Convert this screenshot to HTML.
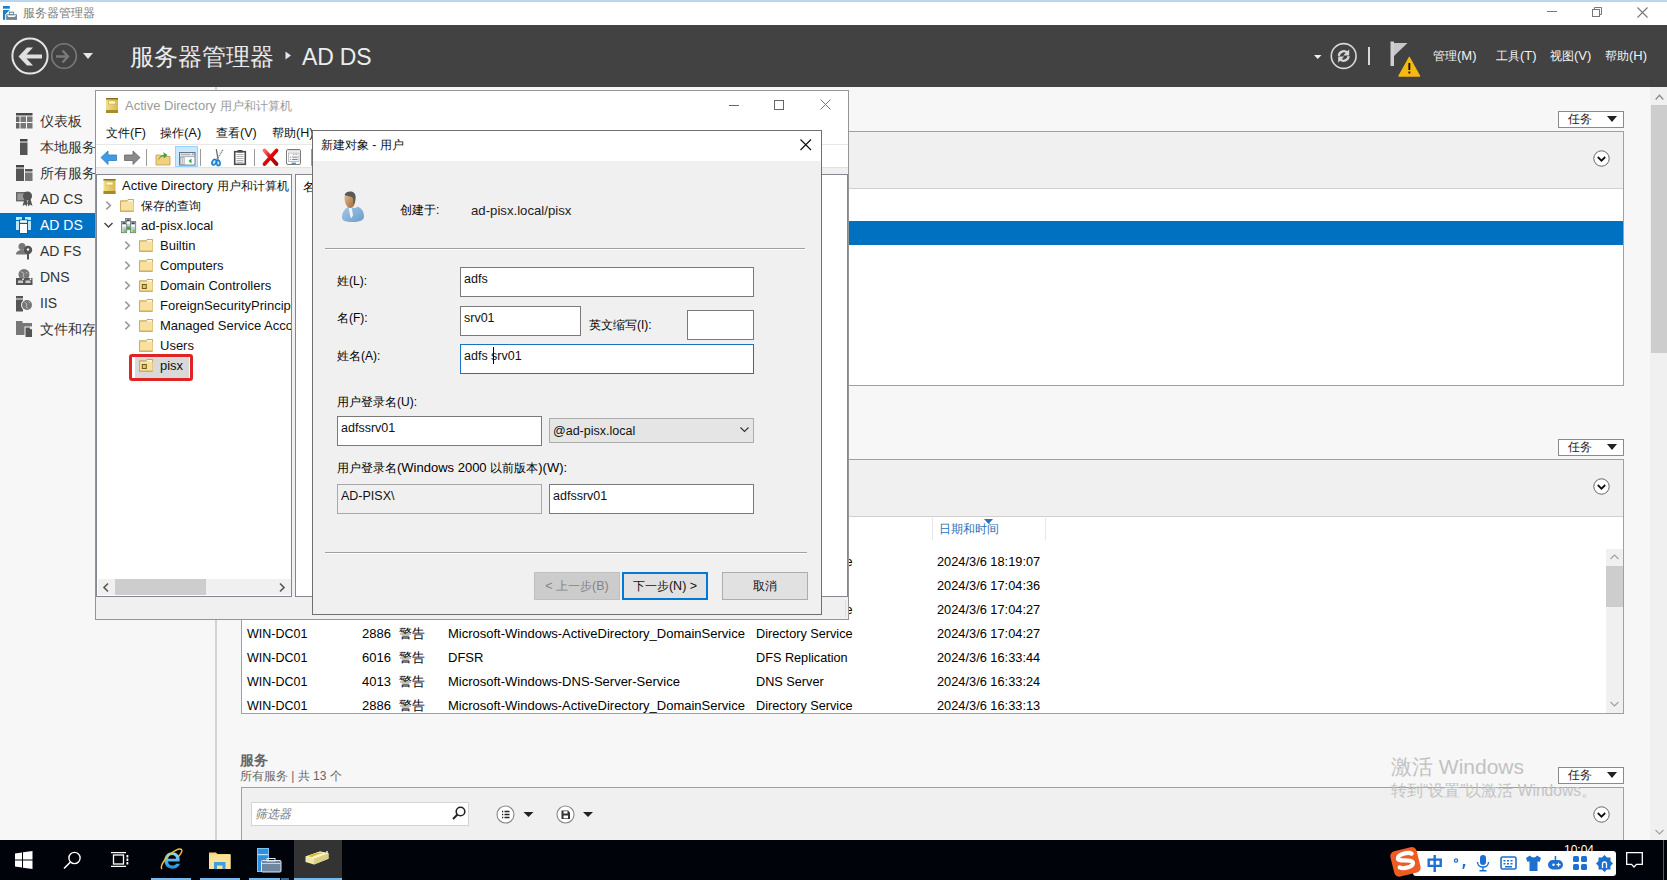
<!DOCTYPE html>
<html><head><meta charset="utf-8">
<style>
*{box-sizing:border-box}
html,body{margin:0;padding:0;width:1667px;height:880px;overflow:hidden;background:#f7f7f7;font-family:"Liberation Sans",sans-serif;color:#000}
.a{position:absolute}
.t{position:absolute;white-space:nowrap;line-height:16px;font-size:13px}
.c{font-size:12px}
svg{position:absolute;overflow:visible}
</style></head><body>
<!-- ===== top title bar ===== -->
<div class="a" style="left:0;top:0;width:1667px;height:2px;background:#bcd5ee"></div>
<div class="a" style="left:0;top:2px;width:1667px;height:23px;background:#fff"></div>
<svg style="left:0;top:2px" width="24" height="22" viewBox="0 0 24 22">
 <rect x="3" y="4" width="6.8" height="2.7" fill="#1f7ccc"/>
 <path d="M3 8h6.8L5.2 12.5V17.8H3z" fill="#1f7ccc"/>
 <rect x="6.2" y="12.3" width="10.8" height="5.6" fill="#6f8797"/>
 <path d="M7 13.2h9.2l-1.5 1.8h-6.2z" fill="#fff"/>
 <rect x="9.5" y="10.2" width="4" height="2.4" fill="none" stroke="#6f8797" stroke-width="1.1"/>
</svg>
<div class="t c" style="left:23px;top:5px;color:#7a7a7a">服务器管理器</div>
<svg style="left:1547px;top:11px" width="11" height="2"><rect width="10" height="1" fill="#777"/></svg>
<svg style="left:1592px;top:7px" width="11" height="11"><rect x="0.5" y="2.5" width="7" height="7" fill="none" stroke="#777"/><path d="M2.5 2.5V0.5h7v7h-2" fill="none" stroke="#777"/></svg>
<svg style="left:1637px;top:7px" width="11" height="11"><path d="M0.5 0.5L10.5 10.5M10.5 0.5L0.5 10.5" stroke="#777" stroke-width="1.1"/></svg>

<!-- ===== dark header ===== -->
<div class="a" style="left:0;top:25px;width:1667px;height:62px;background:#424242"></div>
<svg style="left:0;top:25px" width="100" height="62">
 <circle cx="30" cy="31" r="17.6" fill="none" stroke="#e3e3e3" stroke-width="2"/>
 <path d="M18.5 31.5L27 22.5h6l-6.5 7H42v4H26.5l6.5 7h-6z" fill="#e0e0e0"/>
 <circle cx="64" cy="31" r="12.3" fill="none" stroke="#7a7a7a" stroke-width="1.6"/>
 <path d="M56 31.5h11.5M62.5 25.5l5.5 6-5.5 6" fill="none" stroke="#7a7a7a" stroke-width="2.4"/>
 <path d="M83 28h10l-5 6z" fill="#e6e6e6"/>
</svg>
<div class="t" style="left:130px;top:43px;font-size:24px;line-height:28px;color:#ececec">服务器管理器</div>
<svg style="left:285px;top:51px" width="8" height="10"><path d="M0.5 0.5L6 4.5 0.5 8.5z" fill="#e6e6e6"/></svg>
<div class="t" style="left:302px;top:43px;font-size:23px;line-height:28px;color:#ececec;letter-spacing:-0.2px">AD DS</div>

<svg style="left:1300px;top:25px" width="130" height="62">
 <path d="M14 30h7.5l-3.75 4z" fill="#f0f0f0"/>
 <circle cx="43.7" cy="31" r="12.4" fill="none" stroke="#d8d8d8" stroke-width="1.6"/>
 <path d="M38.8 30.8A5 5 0 0 1 47.2 27.6" fill="none" stroke="#d8d8d8" stroke-width="2.3"/>
 <path d="M49.2 24.3v6.2h-6z" fill="#d8d8d8"/>
 <path d="M48.6 31.2A5 5 0 0 1 40.2 34.4" fill="none" stroke="#d8d8d8" stroke-width="2.3"/>
 <path d="M38.2 37.7v-6.2h6z" fill="#d8d8d8"/>
 <rect x="68" y="22" width="2" height="18" fill="#d8d8d8"/>
 <rect x="90.5" y="16.5" width="3.5" height="24.5" fill="#d0d0d0"/>
 <path d="M94 18h13.5L94 31z" fill="#c8c8c8"/>
 <path d="M109.3 32.5L119.5 51H99z" fill="#f6b811" stroke="#f6b811" stroke-width="1.5" stroke-linejoin="round"/>
 <rect x="108.4" y="38" width="1.9" height="7" fill="#111"/><rect x="108.4" y="46.5" width="1.9" height="2" fill="#111"/>
</svg>
<div class="t" style="left:1433px;top:48px;color:#f2f2f2"><span class="c">管理</span>(M)</div>
<div class="t" style="left:1496px;top:48px;color:#f2f2f2"><span class="c">工具</span>(T)</div>
<div class="t" style="left:1550px;top:48px;color:#f2f2f2"><span class="c">视图</span>(V)</div>
<div class="t" style="left:1605px;top:48px;color:#f2f2f2"><span class="c">帮助</span>(H)</div>

<!-- ===== nav ===== -->
<div class="a" style="left:0;top:87px;width:216px;height:753px;background:#f7f7f7"></div>
<div class="a" style="left:215px;top:87px;width:2px;height:753px;background:#d2d2d2"></div>
<div class="a" style="left:0;top:213px;width:216px;height:25px;background:#0072c6"></div>
<!-- nav placeholder -->
<svg style="left:16px;top:113px" width="17" height="16" viewBox="0 0 17 16">
 <rect x="0" y="0" width="16.5" height="2.5" fill="#4a4a4a"/>
 <rect x="0" y="3.5" width="3.5" height="5.5" fill="#666"/><rect x="4.5" y="3.5" width="5.5" height="5.5" fill="#777"/><rect x="11" y="3.5" width="5.5" height="5.5" fill="#777"/>
 <rect x="0" y="10" width="3.5" height="5.5" fill="#666"/><rect x="4.5" y="10" width="5.5" height="5.5" fill="#777"/><rect x="11" y="10" width="5.5" height="5.5" fill="#777"/>
</svg>
<svg style="left:19.5px;top:139px" width="8" height="16"><rect x="0" y="0" width="7.5" height="2.5" fill="#444"/><rect x="0" y="3.5" width="7.5" height="12.5" fill="#555"/></svg>
<svg style="left:16px;top:165px" width="17" height="17"><rect x="0" y="0" width="8" height="2.5" fill="#444"/><rect x="0" y="3.5" width="8" height="12.5" fill="#555"/><rect x="9" y="4" width="7.5" height="2.5" fill="#555"/><rect x="9" y="7.5" width="7.5" height="8.5" fill="#777"/></svg>
<svg style="left:16px;top:190px" width="17" height="17"><rect x="0.7" y="2.7" width="9" height="8" fill="#999" stroke="#666" stroke-width="1.4"/><circle cx="11.5" cy="6" r="4.6" fill="#555"/><path d="M8.5 9l-2 7 2.5-1.5 1.5 2 1.5-5zM14.5 9l2 7-2.5-1.5-1.5 2-1.5-5z" fill="#555"/></svg>
<svg style="left:15px;top:216px" width="18" height="19" viewBox="0 0 18 19">
 <rect x="1" y="1" width="6" height="3" fill="#b4ecfd"/><rect x="1" y="5" width="6" height="9" fill="#bde6fb"/>
 <rect x="10" y="1" width="6" height="3" fill="#b4ecfd"/><rect x="10" y="5" width="6" height="9" fill="#bde6fb"/>
 <rect x="4" y="3.5" width="9" height="14.5" fill="#0b5d9c"/>
 <rect x="5" y="4.3" width="7" height="2.5" fill="#f4fdff"/><rect x="5" y="8" width="7" height="9" fill="#fff"/>
</svg>
<svg style="left:16px;top:243px" width="17" height="17"><circle cx="6" cy="3.5" r="3.5" fill="#777"/><path d="M0 11.5c0-3 2.5-4.5 6-4.5s5 1 5.5 2v2.5H0z" fill="#777"/><circle cx="12" cy="7" r="4.2" fill="#555"/><circle cx="12" cy="6.5" r="1.2" fill="#f3f3f3"/><rect x="11" y="10" width="2" height="6.5" fill="#555"/></svg>
<svg style="left:16px;top:269px" width="17" height="17"><circle cx="8" cy="5.5" r="5.5" fill="#777"/><path d="M5 2.5l3 2-1 3 2 1.5M10 3l1.5 1.5" stroke="#bbb" stroke-width="1" fill="none"/><rect x="0" y="9" width="16.5" height="7" fill="#555"/><rect x="2" y="11.5" width="5" height="2.5" fill="#ccc"/><rect x="9.5" y="11.5" width="5" height="2.5" fill="#ccc"/><circle cx="7" cy="10.2" r="0.9" fill="#eee"/><circle cx="14.5" cy="10.2" r="0.9" fill="#eee"/></svg>
<svg style="left:16px;top:296px" width="17" height="16"><rect x="0" y="0" width="7" height="2.5" fill="#555"/><rect x="0" y="3.5" width="7" height="12" fill="#555"/><circle cx="11" cy="9" r="6" fill="#f3f3f3"/><circle cx="11" cy="9" r="5" fill="#777"/><path d="M8.5 6l2.5 2-1 3 2 1.5M12.5 5.5l1.5 1.5" stroke="#bbb" stroke-width="1" fill="none"/></svg>
<svg style="left:16px;top:321px" width="17" height="17"><rect x="0" y="0" width="6.5" height="3" fill="#777"/><rect x="0" y="2" width="16" height="12" fill="#777"/><rect x="9" y="6" width="7.5" height="10.5" fill="#555" stroke="#f3f3f3" stroke-width="1"/><circle cx="15" cy="7" r="1.3" fill="#eee"/></svg>
<div class="t c" style="left:40px;top:113px;font-size:14px;line-height:16px;color:#333">仪表板</div>
<div class="t c" style="left:40px;top:139px;font-size:14px;line-height:16px;color:#333">本地服务器</div>
<div class="t c" style="left:40px;top:165px;font-size:14px;line-height:16px;color:#333">所有服务器</div>
<div class="t" style="left:40px;top:191px;font-size:14px;line-height:16px;color:#333">AD CS</div>
<div class="t" style="left:40px;top:217px;font-size:14px;line-height:16px;color:#fff">AD DS</div>
<div class="t" style="left:40px;top:243px;font-size:14px;line-height:16px;color:#333">AD FS</div>
<div class="t" style="left:40px;top:269px;font-size:14px;line-height:16px;color:#333">DNS</div>
<div class="t" style="left:40px;top:295px;font-size:14px;line-height:16px;color:#333">IIS</div>
<div class="t c" style="left:40px;top:321px;font-size:14px;line-height:16px;color:#333">文件和存储服务</div>


<!-- ===== main content ===== -->
<!-- panel 1 -->
<div class="a" style="left:1558px;top:111px;width:66px;height:17px;border:1px solid #8a8a8a;background:#fff"></div>
<div class="t c" style="left:1568px;top:111px;color:#222">任务</div>
<svg style="left:1607px;top:116px" width="10" height="6"><path d="M0 0h10L5 6z" fill="#222"/></svg>
<div class="a" style="left:600px;top:131px;width:1024px;height:255px;border:1px solid #a0a0a0;background:#fff"></div>
<div class="a" style="left:601px;top:132px;width:1022px;height:57px;background:#f0f0f0;border-bottom:1px solid #d0d0d0"></div>
<div class="a" style="left:601px;top:221px;width:1022px;height:24px;background:#0070c0"></div>
<svg style="left:1592px;top:149px" width="19" height="19"><circle cx="9.5" cy="9.5" r="7.7" fill="#fff" stroke="#666" stroke-width="1"/><path d="M5.8 8l3.7 3.7L13.2 8" fill="none" stroke="#111" stroke-width="1.8"/></svg>

<!-- panel 2 -->
<div class="a" style="left:1558px;top:439px;width:66px;height:17px;border:1px solid #8a8a8a;background:#fff"></div>
<div class="t c" style="left:1568px;top:439px;color:#222">任务</div>
<svg style="left:1607px;top:444px" width="10" height="6"><path d="M0 0h10L5 6z" fill="#222"/></svg>
<div class="a" style="left:241px;top:459px;width:1383px;height:255px;border:1px solid #a0a0a0;background:#fff"></div>
<div class="a" style="left:242px;top:460px;width:1381px;height:57px;background:#f0f0f0;border-bottom:1px solid #d0d0d0"></div>
<svg style="left:1592px;top:477px" width="19" height="19"><circle cx="9.5" cy="9.5" r="7.7" fill="#fff" stroke="#666" stroke-width="1"/><path d="M5.8 8l3.7 3.7L13.2 8" fill="none" stroke="#111" stroke-width="1.8"/></svg>
<div class="a" style="left:932px;top:518px;width:1px;height:22px;background:#e6e6e6"></div>
<div class="a" style="left:1045px;top:518px;width:1px;height:22px;background:#e6e6e6"></div>
<div class="t c" style="left:939px;top:521px;color:#2a73b8">日期和时间</div>
<svg style="left:984px;top:519px" width="9" height="5"><path d="M0 0h9L4.5 5z" fill="#2a73b8"/></svg>
<!-- scrollbar in table -->
<div class="a" style="left:1606px;top:549px;width:17px;height:164px;background:#f0f0f0"></div>
<div class="a" style="left:1606px;top:566px;width:17px;height:41px;background:#cdcdcd"></div>
<svg style="left:1610px;top:554px" width="9" height="6"><path d="M0.5 5L4.5 1 8.5 5" fill="none" stroke="#a0a0a0" stroke-width="1.1"/></svg>
<svg style="left:1610px;top:701px" width="9" height="6"><path d="M0.5 1L4.5 5 8.5 1" fill="none" stroke="#a0a0a0" stroke-width="1.1"/></svg>
<!-- rows -->
<div class="a" style="left:242px;top:548px;width:1364px;height:165px;overflow:hidden">
 <div style="position:absolute;left:0;top:1px;width:1364px;height:165px">
  <div class="t" style="left:5px;top:5px;font-size:12.5px">WIN-DC01</div><div class="t" style="left:120px;top:5px">2887</div><div class="t" style="left:157px;top:5px"><span style="font-size:13px">警告</span></div><div class="t" style="left:206px;top:5px">Microsoft-Windows-ActiveDirectory_DomainService</div><div class="t" style="left:514px;top:5px;font-size:12.7px">Directory Service</div><div class="t" style="left:695px;top:5px;font-size:12.8px">2024/3/6 18:19:07</div>
  <div class="t" style="left:5px;top:29px;font-size:12.5px">WIN-DC01</div><div class="t" style="left:120px;top:29px">4013</div><div class="t" style="left:157px;top:29px"><span style="font-size:13px">警告</span></div><div class="t" style="left:206px;top:29px">Microsoft-Windows-DNS-Server-Service</div><div class="t" style="left:514px;top:29px;font-size:12.7px">DNS Server</div><div class="t" style="left:695px;top:29px;font-size:12.8px">2024/3/6 17:04:36</div>
  <div class="t" style="left:5px;top:53px;font-size:12.5px">WIN-DC01</div><div class="t" style="left:120px;top:53px">1202</div><div class="t" style="left:157px;top:53px"><span style="font-size:13px">警告</span></div><div class="t" style="left:206px;top:53px">Microsoft-Windows-ActiveDirectory_DomainService</div><div class="t" style="left:514px;top:53px;font-size:12.7px">Directory Service</div><div class="t" style="left:695px;top:53px;font-size:12.8px">2024/3/6 17:04:27</div>
  <div class="t" style="left:5px;top:77px;font-size:12.5px">WIN-DC01</div><div class="t" style="left:120px;top:77px">2886</div><div class="t" style="left:157px;top:77px"><span style="font-size:13px">警告</span></div><div class="t" style="left:206px;top:77px">Microsoft-Windows-ActiveDirectory_DomainService</div><div class="t" style="left:514px;top:77px;font-size:12.7px">Directory Service</div><div class="t" style="left:695px;top:77px;font-size:12.8px">2024/3/6 17:04:27</div>
  <div class="t" style="left:5px;top:101px;font-size:12.5px">WIN-DC01</div><div class="t" style="left:120px;top:101px">6016</div><div class="t" style="left:157px;top:101px"><span style="font-size:13px">警告</span></div><div class="t" style="left:206px;top:101px">DFSR</div><div class="t" style="left:514px;top:101px;font-size:12.7px">DFS Replication</div><div class="t" style="left:695px;top:101px;font-size:12.8px">2024/3/6 16:33:44</div>
  <div class="t" style="left:5px;top:125px;font-size:12.5px">WIN-DC01</div><div class="t" style="left:120px;top:125px">4013</div><div class="t" style="left:157px;top:125px"><span style="font-size:13px">警告</span></div><div class="t" style="left:206px;top:125px">Microsoft-Windows-DNS-Server-Service</div><div class="t" style="left:514px;top:125px;font-size:12.7px">DNS Server</div><div class="t" style="left:695px;top:125px;font-size:12.8px">2024/3/6 16:33:24</div>
  <div class="t" style="left:5px;top:149px;font-size:12.5px">WIN-DC01</div><div class="t" style="left:120px;top:149px">2886</div><div class="t" style="left:157px;top:149px"><span style="font-size:13px">警告</span></div><div class="t" style="left:206px;top:149px">Microsoft-Windows-ActiveDirectory_DomainService</div><div class="t" style="left:514px;top:149px;font-size:12.7px">Directory Service</div><div class="t" style="left:695px;top:149px;font-size:12.8px">2024/3/6 16:33:13</div>
 </div>
</div>

<!-- services -->
<div class="t" style="left:240px;top:752px;font-size:14px;font-weight:bold;color:#666"><span style="font-size:14px">服务</span></div>
<div class="t c" style="left:240px;top:768px;color:#666">所有服务 | 共 13 个</div>
<div class="a" style="left:1558px;top:767px;width:66px;height:17px;border:1px solid #8a8a8a;background:#fff"></div>
<div class="t c" style="left:1568px;top:767px;color:#222">任务</div>
<svg style="left:1607px;top:772px" width="10" height="6"><path d="M0 0h10L5 6z" fill="#222"/></svg>
<div class="a" style="left:241px;top:787px;width:1383px;height:60px;border:1px solid #a0a0a0;background:#f0f0f0"></div>
<div class="a" style="left:251px;top:802px;width:218px;height:24px;border:1px solid #d4d4d4;background:#fff"></div>
<div class="t c" style="left:255px;top:806px;color:#777;font-style:italic">筛选器</div>
<svg style="left:452px;top:806px" width="14" height="15"><circle cx="8.5" cy="5.5" r="4.3" fill="none" stroke="#222" stroke-width="1.6"/><path d="M5.5 8.5L1 13" stroke="#222" stroke-width="2"/></svg>
<svg style="left:496px;top:805px" width="40" height="19"><circle cx="9.5" cy="9.5" r="8.5" fill="#fff" stroke="#888" stroke-width="1.1"/><path d="M6 6.5h1.2M6 9.5h1.2M6 12.5h1.2M8.5 6.5h5M8.5 9.5h5M8.5 12.5h5" stroke="#222" stroke-width="1.3"/><path d="M27.5 7h10l-5 5z" fill="#222"/></svg>
<svg style="left:556px;top:805px" width="40" height="19"><circle cx="9.5" cy="9.5" r="8.5" fill="#fff" stroke="#888" stroke-width="1.1"/><path d="M5.5 5.5h6.5l2 2v6.5h-8.5z" fill="#333"/><rect x="7.5" y="6.2" width="4" height="2.3" fill="#fff"/><rect x="7.5" y="10.5" width="4.5" height="2.8" fill="#fff"/><path d="M27 7h10l-5 5z" fill="#222"/></svg>
<svg style="left:1592px;top:805px" width="19" height="19"><circle cx="9.5" cy="9.5" r="7.7" fill="#fff" stroke="#666" stroke-width="1"/><path d="M5.8 8l3.7 3.7L13.2 8" fill="none" stroke="#111" stroke-width="1.8"/></svg>
<!-- watermark -->
<div class="t" style="left:1391px;top:755px;font-size:21px;line-height:24px;color:#c2c2c2">激活 Windows</div>
<div class="t" style="left:1391px;top:782px;font-size:15.6px;line-height:18px;color:#c4c4c4">转到“设置”以激活 Windows。</div>
<!-- page scrollbar -->
<div class="a" style="left:1650px;top:87px;width:17px;height:753px;background:#f0f0f0"></div>
<div class="a" style="left:1651px;top:105px;width:16px;height:248px;background:#cdcdcd"></div>
<svg style="left:1655px;top:94px" width="9" height="7"><path d="M0.7 5.5L4.5 1.2 8.3 5.5" fill="none" stroke="#8a8a8a" stroke-width="1.3"/></svg>
<svg style="left:1655px;top:829px" width="9" height="6"><path d="M0.5 1L4.5 5 8.5 1" fill="none" stroke="#a0a0a0" stroke-width="1.1"/></svg>


<!-- ===== ADUC window ===== -->
<div class="a" style="left:95px;top:90px;width:754px;height:530px;border:1px solid #959595;background:#f0f0f0"></div>
<div class="a" style="left:96px;top:91px;width:752px;height:76px;background:#fff"></div>
<div class="a" style="left:96px;top:144px;width:752px;height:1px;background:#e8e8e8"></div>
<div class="a" style="left:96px;top:167px;width:752px;height:1px;background:#e2e2e2"></div>
<svg style="left:106px;top:98px" width="12" height="15" viewBox="0 0 12 15"><defs><linearGradient id="bk" x1="0" x2="1"><stop offset="0" stop-color="#f3e08a"/><stop offset="1" stop-color="#d9b94a"/></linearGradient></defs><rect x="0" y="0" width="12" height="15" fill="url(#bk)"/><rect x="0" y="0" width="12" height="1.5" fill="#8a6d1e"/><rect x="0" y="12" width="12" height="3" fill="#a8892c"/><rect x="2.5" y="3" width="7" height="3" fill="#fffbd0" stroke="#c9ab4a" stroke-width="0.6"/></svg>
<div class="t" style="left:125px;top:98px;color:#9a9a9a;font-size:13px">Active Directory <span class="c">用户和计算机</span></div>
<svg style="left:729px;top:105px" width="12" height="2"><rect width="10" height="1" fill="#666"/></svg>
<svg style="left:774px;top:100px" width="11" height="11"><rect x="0.5" y="0.5" width="9" height="9" fill="none" stroke="#666"/></svg>
<svg style="left:820px;top:99px" width="11" height="11"><path d="M0.5 0.5L10.5 10.5M10.5 0.5L0.5 10.5" stroke="#777" stroke-width="1"/></svg>
<div class="t" style="left:106px;top:125px;font-size:12.5px;color:#111"><span class="c">文件</span>(F)</div>
<div class="t" style="left:160px;top:125px;font-size:13px;color:#111"><span class="c">操作</span>(A)</div>
<div class="t" style="left:216px;top:125px;font-size:12.5px;color:#111"><span class="c">查看</span>(V)</div>
<div class="t" style="left:272px;top:125px;font-size:12.5px;color:#111"><span class="c">帮助</span>(H)</div>
<!-- toolbar -->
<svg style="left:100px;top:148px" width="215" height="20">
 <path d="M1 9.5L8 3v4h8.5v5.5H8v4z" fill="#3f9be6" stroke="#2b7bc2" stroke-width="0.8"/>
 <path d="M40 9.5L33 3v4h-8.5v5.5H33v4z" fill="#8a8a8a" stroke="#666" stroke-width="0.8"/>
 <rect x="46" y="1" width="1" height="17" fill="#9a9a9a"/>
 <path d="M56 7h5l1.5 1.5H70V17H56z" fill="#f1d083" stroke="#c9a04a" stroke-width="0.8"/>
 <path d="M58 13c1-4 3-6 6-6.5l-1-2.5 4.5 3-3.5 3.5-0.5-2.5c-2 0.5-4 2-5.5 5z" fill="#3aa63a"/>
 <rect x="75.5" y="-1.5" width="22" height="20" fill="#cce8ff" stroke="#99d1ff"/>
 <rect x="79.5" y="4.5" width="15.5" height="12.5" fill="#e9eef2" stroke="#6a7580" stroke-width="1"/><path d="M80.5 6.3h10M80.5 8.3h14" stroke="#9aa4ad" stroke-width="0.9"/><rect x="92" y="5.6" width="1" height="1" fill="#6a7580"/><rect x="93.5" y="5.6" width="1" height="1" fill="#6a7580"/>
 <rect x="80.5" y="9.5" width="3.6" height="6.8" fill="#fff" stroke="#8a949c" stroke-width="0.6"/><path d="M81.3 11h2M81.3 13h2M81.3 15h2" stroke="#6a7580" stroke-width="0.8"/>
 <rect x="85.2" y="9.5" width="9" height="6.8" fill="#fff"/><path d="M91.5 10.5v5l-3-2.5z" fill="#3aa63a"/>
 <rect x="100" y="1" width="1" height="17" fill="#9a9a9a"/>
 <path d="M116.3 1.2L118.2 12.5" stroke="#6d6d6d" stroke-width="1.3"/><path d="M122.8 2L116.2 12.5" stroke="#7d8a96" stroke-width="1.6" stroke-dasharray="1.2 0.8"/>
 <ellipse cx="114.2" cy="14.2" rx="2" ry="2.9" transform="rotate(30 114.2 14.2)" fill="#bfe3fb" stroke="#1f7fcf" stroke-width="1.6"/>
 <ellipse cx="118.3" cy="15" rx="1.8" ry="2.6" transform="rotate(-10 118.3 15)" fill="#bfe3fb" stroke="#1f7fcf" stroke-width="1.6"/>
 <rect x="134.7" y="3.7" width="10.6" height="12.6" fill="#fff" stroke="#4a4a4a" stroke-width="1.6"/><rect x="137.5" y="2" width="5" height="2.5" fill="#4a4a4a"/><path d="M136.5 6.5h7M136.5 8.5h7M136.5 10.5h7M136.5 12.5h7M136.5 14.3h7" stroke="#9a9a9a" stroke-width="0.8"/>
 <rect x="154" y="1" width="1" height="17" fill="#9a9a9a"/>
 <defs><linearGradient id="rx" x1="0" y1="0" x2="1" y2="1"><stop offset="0" stop-color="#f07070"/><stop offset="0.5" stop-color="#e00000"/><stop offset="1" stop-color="#a00000"/></linearGradient></defs>
 <path d="M164.5 2.5l12 13.5M176.5 2.5l-12 13.5" stroke="url(#rx)" stroke-width="3.8" stroke-linecap="round"/>
 <rect x="186.5" y="1.5" width="14" height="15" rx="1.5" fill="#fff" stroke="#7a7a7a" stroke-width="1"/><rect x="187" y="2" width="13" height="1.5" fill="#ddd"/><rect x="188.5" y="5" width="10.5" height="8.5" fill="#f6f6f6" stroke="#a8a8a8" stroke-width="0.7"/><path d="M193 6.3h1.5M195.5 6.3h1.5" stroke="#8a9aa8" stroke-width="0.9"/><path d="M190.2 9.2h0.8M192.2 9.2h5.5M190.2 11.5h0.8M192.2 11.5h5.5" stroke="#6a7a8a" stroke-width="0.9"/><rect x="191.5" y="14.6" width="4.5" height="1.6" fill="#3fa0e0"/>
 <rect x="211" y="1" width="1" height="17" fill="#9a9a9a"/>
</svg>
<!-- panes -->
<div class="a" style="left:96px;top:174px;width:196px;height:423px;border:1px solid #828790;background:#fff;overflow:hidden">
 <div class="a" style="left:1px;top:404px;width:193px;height:16px;background:#f0f0f0"></div>
 <div class="a" style="left:18px;top:404px;width:91px;height:16px;background:#cdcdcd"></div>
 <svg style="left:6px;top:408px" width="6" height="9"><path d="M5 0.5L1 4.5 5 8.5" fill="none" stroke="#555" stroke-width="1.6"/></svg>
 <svg style="left:182px;top:408px" width="6" height="9"><path d="M1 0.5L5 4.5 1 8.5" fill="none" stroke="#555" stroke-width="1.6"/></svg>
</div>
<div class="a" style="left:295px;top:174px;width:553px;height:423px;border:1px solid #828790;background:#fff"></div>
<div class="t c" style="left:303px;top:179px;color:#000">名</div>
<div class="a" style="left:845px;top:600px;width:1px;height:17px;background:#dadada"></div>
<div class="a" style="left:0;top:0;width:291px;height:579px;overflow:hidden"><svg style="left:103px;top:179px" width="13" height="15" viewBox="0 0 12 15"><rect x="0" y="0" width="12" height="15" fill="url(#bk)"/><rect x="0" y="0" width="12" height="1.5" fill="#8a6d1e"/><rect x="0" y="12" width="12" height="3" fill="#a8892c"/><rect x="2.5" y="3" width="7" height="3" fill="#fffbd0" stroke="#c9ab4a" stroke-width="0.6"/></svg>
<div class="t" style="left:122px;top:178px;font-size:13px;color:#111">Active Directory <span class="c">用户和计算机</span></div>
<svg style="left:105px;top:201px" width="7" height="9"><path d="M1.3 0.7L5.3 4.5 1.3 8.3" fill="none" stroke="#9a9a9a" stroke-width="1.6"/></svg>
<svg style="left:120px;top:199px" width="15" height="13"><path d="M0.5 1.8h6.3l1.3-1.3h5.4v12h-13z" fill="#f3d27e" stroke="#c59d4c" stroke-width="0.9"/><rect x="8.3" y="1.2" width="4.8" height="1.4" fill="#fff"/><rect x="0.9" y="3" width="12.7" height="9.1" fill="#f8e0a0"/><rect x="0.9" y="11" width="12.7" height="1.1" fill="#e8c878"/></svg>
<div class="t c" style="left:141px;top:198px;color:#111">保存的查询</div>
<svg style="left:104px;top:222px" width="10" height="7"><path d="M0.5 1L4.5 5 8.5 1" fill="none" stroke="#444" stroke-width="1.4"/></svg>
<svg style="left:121px;top:218px" width="16" height="16" viewBox="0 0 16 16">
 <g stroke="#6d7378" stroke-width="0.8">
 <rect x="4.4" y="0.4" width="5.3" height="11.3" fill="#c9cfd4"/>
 <rect x="0.4" y="3.4" width="5.3" height="11.3" fill="#c9cfd4"/>
 <rect x="9.4" y="3.4" width="5.3" height="11.3" fill="#c9cfd4"/>
 </g>
 <rect x="1.5" y="4.5" width="3.2" height="1.3" fill="#222"/><rect x="10.5" y="4.5" width="3.2" height="1.3" fill="#222"/><rect x="5.5" y="1.5" width="3.2" height="1.3" fill="#222"/>
 <rect x="1.2" y="7" width="3.8" height="1.8" fill="#f2f8fc"/><rect x="10.2" y="7" width="3.8" height="1.8" fill="#f2f8fc"/><rect x="5.7" y="4" width="3.4" height="1.8" fill="#f2f8fc"/>
 <rect x="2.5" y="11.5" width="2.8" height="2.8" fill="#6fd04a"/><rect x="11.5" y="11.5" width="2.8" height="2.8" fill="#6fd04a"/><rect x="6" y="8.5" width="3.2" height="2.8" fill="#3faa3a"/>
</svg>
<div class="t" style="left:141px;top:218px;font-size:13px;color:#111">ad-pisx.local</div>
<svg style="left:124px;top:241px" width="7" height="9"><path d="M1.3 0.7L5.3 4.5 1.3 8.3" fill="none" stroke="#9a9a9a" stroke-width="1.6"/></svg>
<svg style="left:139px;top:239px" width="15" height="13"><path d="M0.5 1.8h6.3l1.3-1.3h5.4v12h-13z" fill="#f3d27e" stroke="#c59d4c" stroke-width="0.9"/><rect x="8.3" y="1.2" width="4.8" height="1.4" fill="#fff"/><rect x="0.9" y="3" width="12.7" height="9.1" fill="#f8e0a0"/><rect x="0.9" y="11" width="12.7" height="1.1" fill="#e8c878"/></svg>
<div class="t" style="left:160px;top:238px;font-size:13px;color:#111">Builtin</div>
<svg style="left:124px;top:261px" width="7" height="9"><path d="M1.3 0.7L5.3 4.5 1.3 8.3" fill="none" stroke="#9a9a9a" stroke-width="1.6"/></svg>
<svg style="left:139px;top:259px" width="15" height="13"><path d="M0.5 1.8h6.3l1.3-1.3h5.4v12h-13z" fill="#f3d27e" stroke="#c59d4c" stroke-width="0.9"/><rect x="8.3" y="1.2" width="4.8" height="1.4" fill="#fff"/><rect x="0.9" y="3" width="12.7" height="9.1" fill="#f8e0a0"/><rect x="0.9" y="11" width="12.7" height="1.1" fill="#e8c878"/></svg>
<div class="t" style="left:160px;top:258px;font-size:13px;color:#111">Computers</div>
<svg style="left:124px;top:281px" width="7" height="9"><path d="M1.3 0.7L5.3 4.5 1.3 8.3" fill="none" stroke="#9a9a9a" stroke-width="1.6"/></svg>
<svg style="left:139px;top:279px" width="15" height="13"><path d="M0.5 1.8h6.3l1.3-1.3h5.4v12h-13z" fill="#f3d27e" stroke="#c59d4c" stroke-width="0.9"/><rect x="8.3" y="1.2" width="4.8" height="1.4" fill="#fff"/><rect x="0.9" y="3" width="12.7" height="9.1" fill="#f8e0a0"/><rect x="0.9" y="11" width="12.7" height="1.1" fill="#e8c878"/><rect x="2.8" y="5" width="5" height="5" fill="#6e5a16"/><rect x="3.8" y="6" width="3" height="3" fill="#d8c870"/></svg>
<div class="t" style="left:160px;top:278px;font-size:13px;color:#111">Domain Controllers</div>
<svg style="left:124px;top:301px" width="7" height="9"><path d="M1.3 0.7L5.3 4.5 1.3 8.3" fill="none" stroke="#9a9a9a" stroke-width="1.6"/></svg>
<svg style="left:139px;top:299px" width="15" height="13"><path d="M0.5 1.8h6.3l1.3-1.3h5.4v12h-13z" fill="#f3d27e" stroke="#c59d4c" stroke-width="0.9"/><rect x="8.3" y="1.2" width="4.8" height="1.4" fill="#fff"/><rect x="0.9" y="3" width="12.7" height="9.1" fill="#f8e0a0"/><rect x="0.9" y="11" width="12.7" height="1.1" fill="#e8c878"/></svg>
<div class="t" style="left:160px;top:298px;font-size:13px;color:#111">ForeignSecurityPrincipals</div>
<svg style="left:124px;top:321px" width="7" height="9"><path d="M1.3 0.7L5.3 4.5 1.3 8.3" fill="none" stroke="#9a9a9a" stroke-width="1.6"/></svg>
<svg style="left:139px;top:319px" width="15" height="13"><path d="M0.5 1.8h6.3l1.3-1.3h5.4v12h-13z" fill="#f3d27e" stroke="#c59d4c" stroke-width="0.9"/><rect x="8.3" y="1.2" width="4.8" height="1.4" fill="#fff"/><rect x="0.9" y="3" width="12.7" height="9.1" fill="#f8e0a0"/><rect x="0.9" y="11" width="12.7" height="1.1" fill="#e8c878"/></svg>
<div class="t" style="left:160px;top:318px;font-size:13px;color:#111">Managed Service Accounts</div>
<svg style="left:139px;top:339px" width="15" height="13"><path d="M0.5 1.8h6.3l1.3-1.3h5.4v12h-13z" fill="#f3d27e" stroke="#c59d4c" stroke-width="0.9"/><rect x="8.3" y="1.2" width="4.8" height="1.4" fill="#fff"/><rect x="0.9" y="3" width="12.7" height="9.1" fill="#f8e0a0"/><rect x="0.9" y="11" width="12.7" height="1.1" fill="#e8c878"/></svg>
<div class="t" style="left:160px;top:338px;font-size:13px;color:#111">Users</div>
<div class="a" style="left:129px;top:354px;width:64px;height:27px;border:3px solid #e02424;border-radius:3px"></div>
<div class="a" style="left:135px;top:357px;width:54px;height:21px;background:#d9d9d9"></div>
<svg style="left:139px;top:359px" width="15" height="13"><path d="M0.5 1.8h6.3l1.3-1.3h5.4v12h-13z" fill="#f3d27e" stroke="#c59d4c" stroke-width="0.9"/><rect x="8.3" y="1.2" width="4.8" height="1.4" fill="#fff"/><rect x="0.9" y="3" width="12.7" height="9.1" fill="#f8e0a0"/><rect x="0.9" y="11" width="12.7" height="1.1" fill="#e8c878"/><rect x="2.8" y="5" width="5" height="5" fill="#6e5a16"/><rect x="3.8" y="6" width="3" height="3" fill="#d8c870"/></svg>
<div class="t" style="left:160px;top:358px;font-size:13px;color:#111">pisx</div></div>


<!-- ===== dialog ===== -->
<div class="a" style="left:312px;top:130px;width:510px;height:485px;border:1px solid #6f6f6f;background:#f0f0f0"></div>
<div class="a" style="left:313px;top:131px;width:508px;height:30px;background:#fff"></div>
<div class="t c" style="left:321px;top:137px;color:#111">新建对象 - 用户</div>
<svg style="left:800px;top:139px" width="12" height="12"><path d="M0.5 0.5L11 11M11 0.5L0.5 11" stroke="#111" stroke-width="1.2"/></svg>
<!-- user icon -->
<svg style="left:341px;top:191px" width="24" height="33" viewBox="0 0 24 33">
 <defs><linearGradient id="fc" x1="0" y1="0" x2="1" y2="1"><stop offset="0" stop-color="#e8c49a"/><stop offset="1" stop-color="#9a6232"/></linearGradient>
 <linearGradient id="sh" x1="0" y1="0" x2="1" y2="1"><stop offset="0" stop-color="#a5c8e8"/><stop offset="1" stop-color="#6b9bcb"/></linearGradient></defs>
 <path d="M1 26.5c0-5 2.5-9 7.5-11l2 1 4 0.5 2-1.5c4 1.5 6.5 5 6.5 10 0 3-3 5.5-11 5.5S1 29.5 1 26.5z" fill="url(#sh)"/>
 <path d="M7.5 15.5c0.5 4 1.5 9 2.5 12l2-3c-0.5-3-1-6-1.5-9z" fill="#eef4fa"/>
 <path d="M3.5 6.5c0-3.5 2.5-5.5 5.5-5.5s5.5 2 5.5 5.5c0 4.5-1 10-5 10.5s-6-6-6-10.5z" fill="url(#fc)"/>
 <path d="M3.5 4c1-2.5 3-3.5 5.5-3.5 3.5 0 5.5 2 5.5 5 0 2.5-0.5 5-1.5 7.5l-1-1c0.5-2 0.5-4-0.5-5.5-2-1-5-1.5-8-2.5z" fill="#5a5a5a"/>
</svg>
<div class="t c" style="left:400px;top:202px;color:#000">创建于:</div>
<div class="t" style="left:471px;top:203px;font-size:13.2px;color:#222">ad-pisx.local/pisx</div>
<div class="a" style="left:325px;top:248px;width:480px;height:1px;background:#a0a0a0"></div>
<div class="a" style="left:325px;top:249px;width:480px;height:1px;background:#fff"></div>

<div class="t c" style="left:337px;top:273px;color:#000">姓(L):</div>
<div class="a" style="left:460px;top:267px;width:294px;height:30px;border:1px solid #7a7a7a;background:#fff"></div>
<div class="t" style="left:464px;top:271px;font-size:12.5px;color:#111">adfs</div>

<div class="t c" style="left:337px;top:310px;color:#000">名(F):</div>
<div class="a" style="left:460px;top:306px;width:121px;height:30px;border:1px solid #7a7a7a;background:#fff"></div>
<div class="t" style="left:464px;top:310px;font-size:12.5px;color:#111">srv01</div>
<div class="t c" style="left:589px;top:317px;color:#000">英文缩写(I):</div>
<div class="a" style="left:687px;top:310px;width:67px;height:30px;border:1px solid #7a7a7a;background:#fff"></div>

<div class="t c" style="left:337px;top:348px;color:#000">姓名(A):</div>
<div class="a" style="left:460px;top:344px;width:294px;height:30px;border:1px solid #1a72c0;background:#fff"></div>
<div class="t" style="left:464px;top:348px;font-size:12.5px;color:#111">adfs srv01</div>
<div class="a" style="left:493px;top:347px;width:1px;height:17px;background:#000"></div>

<div class="t c" style="left:337px;top:394px;color:#000">用户登录名(U):</div>
<div class="a" style="left:337px;top:416px;width:205px;height:30px;border:1px solid #7a7a7a;background:#fff"></div>
<div class="t" style="left:341px;top:420px;font-size:12.5px;color:#111">adfssrv01</div>
<div class="a" style="left:549px;top:418px;width:205px;height:25px;border:1px solid #adadad;background:#e5e5e5"></div>
<div class="t" style="left:553px;top:423px;font-size:12.5px;color:#111">@ad-pisx.local</div>
<svg style="left:740px;top:427px" width="10" height="6"><path d="M0.5 0.5L4.5 4.5 8.5 0.5" fill="none" stroke="#333" stroke-width="1.1"/></svg>

<div class="t" style="left:337px;top:460px;color:#000;font-size:13px"><span class="c">用户登录名</span>(Windows 2000 <span class="c">以前版本</span>)(W):</div>
<div class="a" style="left:337px;top:484px;width:205px;height:30px;border:1px solid #a8a8a8;background:#f0f0f0"></div>
<div class="t" style="left:341px;top:488px;font-size:12.5px;color:#111">AD-PISX\</div>
<div class="a" style="left:549px;top:484px;width:205px;height:30px;border:1px solid #7a7a7a;background:#fff"></div>
<div class="t" style="left:553px;top:488px;font-size:12.5px;color:#111">adfssrv01</div>

<div class="a" style="left:325px;top:552px;width:482px;height:1px;background:#a0a0a0"></div>
<div class="a" style="left:325px;top:553px;width:482px;height:1px;background:#fff"></div>

<div class="a" style="left:534px;top:572px;width:86px;height:28px;border:1px solid #bfbfbf;background:#cccccc"></div>
<div class="t" style="left:534px;top:578px;width:86px;text-align:center;font-size:12.5px;color:#838383">&lt; <span class="c">上一步</span>(B)</div>
<div class="a" style="left:622px;top:572px;width:86px;height:28px;border:2px solid #0078d7;background:#e1e1e1"></div>
<div class="t" style="left:622px;top:578px;width:86px;text-align:center;font-size:12.5px;color:#111"><span class="c">下一步</span>(N) &gt;</div>
<div class="a" style="left:722px;top:572px;width:86px;height:28px;border:1px solid #adadad;background:#e1e1e1"></div>
<div class="t c" style="left:722px;top:578px;width:86px;text-align:center;color:#111">取消</div>


<!-- ===== taskbar ===== -->
<div class="a" style="left:0;top:840px;width:1667px;height:40px;background:#01030a"></div>
<svg style="left:15px;top:851px" width="18" height="18"><path d="M0 2.4L7 1.4v7.1H0zM8 1.3L17.5 0v8.5H8zM0 9.5h7v7.1L0 15.6zM8 9.5h9.5V18L8 16.7z" fill="#fff"/></svg>
<svg style="left:63px;top:851px" width="19" height="19"><circle cx="11.5" cy="7" r="5.6" fill="none" stroke="#fff" stroke-width="1.4"/><path d="M7.5 11L1 17.5" stroke="#fff" stroke-width="1.6"/></svg>
<svg style="left:111px;top:852px" width="18" height="15"><rect x="2.5" y="3" width="10" height="9" fill="none" stroke="#fff" stroke-width="1.3"/><path d="M0 0.7h15M0 14.3h15" stroke="#fff" stroke-width="1.3"/><rect x="15.5" y="3" width="1.8" height="2.5" fill="#fff"/><rect x="15.5" y="6.5" width="1.8" height="2.5" fill="#fff"/><rect x="15.5" y="10" width="1.8" height="2.5" fill="#fff"/></svg>
<!-- IE -->
<svg style="left:159px;top:847px" width="24" height="24" viewBox="0 0 24 24">
 <defs><linearGradient id="ie" x1="0" y1="0" x2="0" y2="1"><stop offset="0" stop-color="#8fe0ff"/><stop offset="1" stop-color="#1b8fd6"/></linearGradient></defs>
 <path d="M20.5 14.5H9c0.3 2.5 2 4 4.5 4 1.8 0 3-0.7 3.8-1.8h3.7c-1.2 3.2-4 5-7.6 5-4.6 0-8-3.3-8-8.2S8.8 5.3 13.4 5.3c4.4 0 7.3 3.2 7.3 7.7zM9.1 11.7h8c-0.2-2.3-1.7-3.6-3.9-3.6-2.3 0-3.8 1.4-4.1 3.6z" fill="url(#ie)"/>
 <path d="M3 22c-2-2 1-8 6-13s11-8 13.5-6.5c1.3 1-0.3 4-3 7" fill="none" stroke="#f2c12e" stroke-width="1.5"/>
</svg>
<!-- explorer -->
<svg style="left:209px;top:851px" width="22" height="19"><path d="M0 1.5h7l1.5 1.5H21.5V18H0z" fill="#f8d775"/><rect x="0" y="4" width="21.5" height="14" fill="#fbe19a"/><path d="M5 18v-7h11.5v7h-3v-3.5h-5.5V18z" fill="#3c9fe0"/></svg>
<!-- server manager -->
<svg style="left:257px;top:848px" width="25" height="25"><rect x="0.5" y="0.5" width="11" height="23" fill="#2d8fe0" stroke="#7cc3f5" stroke-width="1"/><rect x="1" y="6" width="10" height="1.2" fill="#bde3fb"/><rect x="4.5" y="12.5" width="19.5" height="11.5" rx="1" fill="#6f85a0" stroke="#dfe8f0" stroke-width="1"/><rect x="10" y="10.5" width="8" height="2.5" fill="none" stroke="#dfe8f0" stroke-width="1"/><path d="M5 15.5h18.5" stroke="#dfe8f0" stroke-width="0.8"/></svg>
<div class="a" style="left:294px;top:840px;width:48px;height:40px;background:#333"></div>
<svg style="left:305px;top:850px" width="25" height="16" viewBox="0 0 25 16">
 <path d="M0.5 6.5L15 1.5l8.5 1.8v5.5L9 14.5 0.5 12z" fill="#efe7a8"/>
 <path d="M0.5 6.5L15 1.5l8.5 1.8L9 8.8z" fill="#fbf4c4"/>
 <path d="M9 8.8l14.5-5.5v5.5L9 14.5z" fill="#d9cf86"/>
 <path d="M3 6.2c3-1.8 8-3.5 12.5-3.8l3 0.8c-4 0.5-9 2.2-11.5 4z" fill="#d9b93a"/>
 <circle cx="22" cy="2" r="1" fill="#eee"/>
</svg>
<div class="a" style="left:151px;top:878px;width:40px;height:2px;background:#76b9ed"></div>
<div class="a" style="left:200px;top:878px;width:40px;height:2px;background:#76b9ed"></div>
<div class="a" style="left:249px;top:878px;width:31px;height:2px;background:#76b9ed"></div>
<div class="a" style="left:281px;top:878px;width:8px;height:2px;background:#3b6b92"></div>
<div class="a" style="left:294px;top:878px;width:48px;height:2px;background:#76b9ed"></div>
<!-- systray -->
<div class="t" style="left:1564px;top:843px;font-size:12px;line-height:14px;color:#fff">10:04</div>
<div class="a" style="left:1413px;top:851px;width:203px;height:25px;background:#fff;border-radius:3px"></div>
<svg style="left:1388px;top:846px" width="36" height="33" viewBox="0 0 36 33"><g transform="rotate(-14 17 16)"><rect x="4" y="3" width="27" height="26" rx="5" fill="#ee5b23"/><path d="M25.5 9.5C23 6.8 11.5 6.5 11 11c-0.4 3.6 13.5 3.2 13.5 7.5 0 4.3-10.5 4.5-14 1.5" fill="none" stroke="#fff" stroke-width="4.2" stroke-linecap="round" stroke-linejoin="round"/></g></svg>
<svg style="left:1427px;top:855px" width="190" height="18" viewBox="0 0 190 18">
 <g fill="#1d6fd0">
  <path d="M6.5 0h2.4v3.5h6v8.5h-6v5h-2.4v-5h-6V3.5h6zM2.9 5.7v4.1h3.6V5.7zM8.9 5.7v4.1h3.6V5.7z"/>
  <circle cx="29" cy="5.5" r="1.6" fill="none" stroke="#1d6fd0" stroke-width="1.3"/><path d="M36 9h2.6l-1.6 5h-1.5z"/>
  <rect x="53" y="0" width="6" height="10" rx="3"/><path d="M50.5 7c0 3 2.3 5 5.5 5s5.5-2 5.5-5" fill="none" stroke="#1d6fd0" stroke-width="1.4"/><rect x="55.3" y="12" width="1.4" height="3"/><rect x="52.5" y="15" width="7" height="1.5"/>
  <rect x="74" y="2" width="15" height="12" rx="1.5" fill="none" stroke="#1d6fd0" stroke-width="1.6"/><path d="M76.5 5h2v1.6h-2zM80 5h2v1.6h-2zM83.5 5h2v1.6h-2zM76.5 8h2v1.6h-2zM80 8h2v1.6h-2zM83.5 8h2v1.6h-2zM78 11h7v1.4h-7z"/>
  <path d="M99 3l4-2.5c0.8 1.3 2 2 3.5 2s2.7-0.7 3.5-2l4 2.5-1.5 4-2-0.8V16h-8V6.2l-2 0.8z"/>
  <rect x="121" y="5" width="15" height="9.5" rx="4.7"/><circle cx="126.5" cy="9.8" r="1.2" fill="#fff"/><path d="M129.5 9.7h4M131.5 7.7v4" stroke="#fff" stroke-width="1.2"/><rect x="127.7" y="1" width="1.5" height="4"/>
  <rect x="146" y="1" width="6" height="6" rx="1.5"/><rect x="154" y="1" width="6" height="6" rx="1.5"/><rect x="146" y="9" width="6" height="6" rx="1.5"/><rect x="154" y="9" width="6" height="6" rx="1.5"/>
  <path d="M177.5 0l2.5 2.5h3.5v3.5l2.5 2.5-2.5 2.5v3.5H180l-2.5 2.5-2.5-2.5h-3.5V11l-2.5-2.5 2.5-2.5V2.5h3.5z"/><path d="M175.5 13v-4a2 2 0 0 1 4 0v4" fill="none" stroke="#fff" stroke-width="1.3"/>
 </g>
</svg>
<svg style="left:1626px;top:852px" width="18" height="18"><path d="M0.7 0.7h15.6v11.6H10.5L8 15l-2.5-2.7H0.7z" fill="none" stroke="#fff" stroke-width="1.3"/></svg>
<div class="a" style="left:1663px;top:840px;width:1px;height:40px;background:#5a5a5a"></div>

</body></html>
